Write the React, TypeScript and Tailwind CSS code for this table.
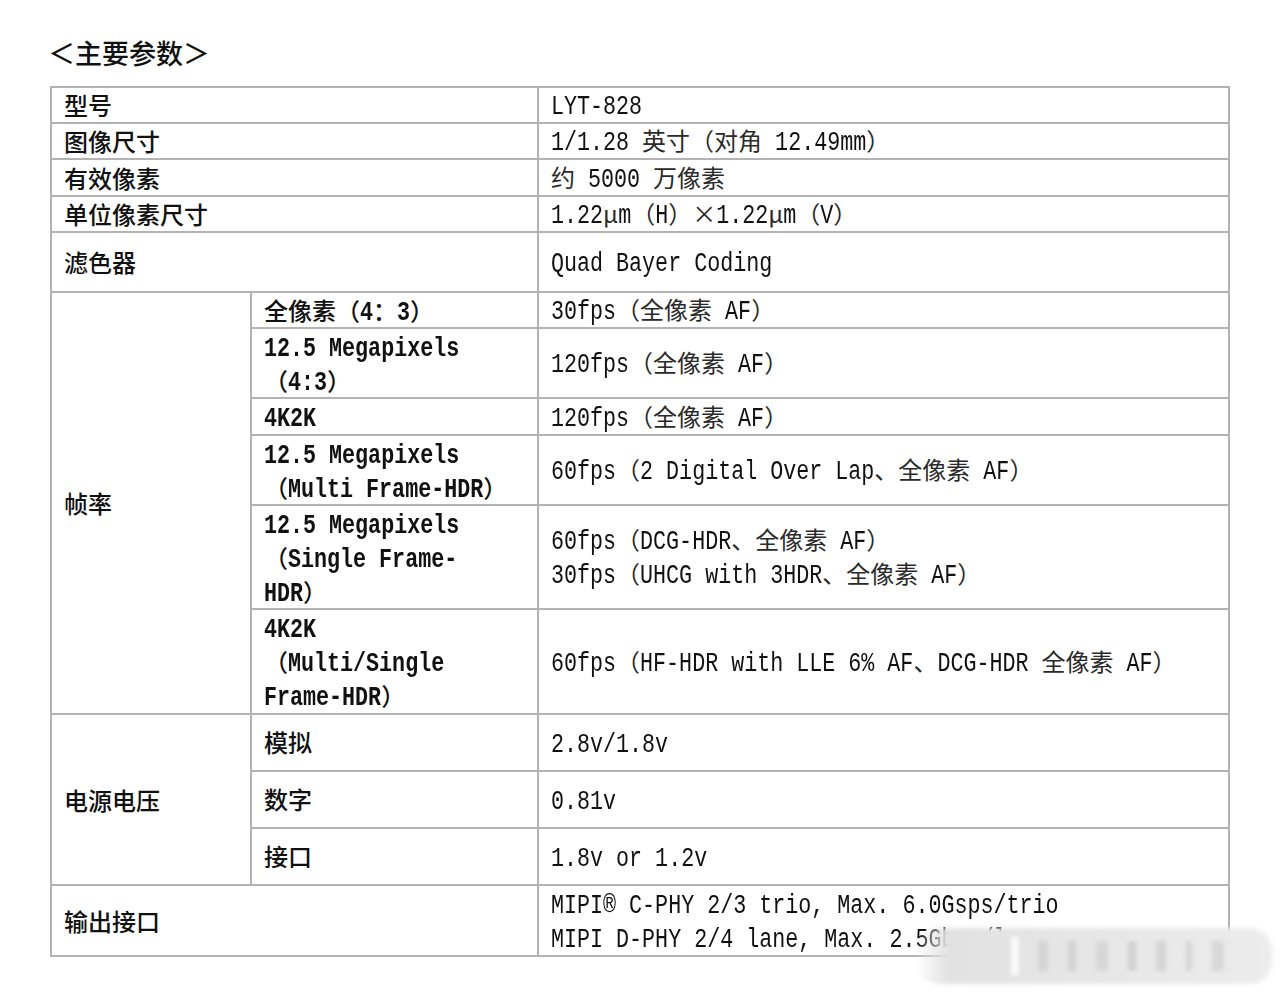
import React from "react";

type Line = string | string[];

const CJK = "font-['Noto_Sans_CJK_SC',sans-serif]";
// full-width runs (CJK, full-width punctuation, ×, μ) are split from half-width Latin runs
const WIDE = /([\u2E80-\u9FFF\u3000-\u303F\uFF00-\uFFEF×μ]+)/;

const FRAME_RATES: { mode: Line; fps: Line }[] = [
  { mode: "全像素（4：3）", fps: "30fps（全像素 AF）" },
  { mode: ["12.5 Megapixels", "（4:3）"], fps: "120fps（全像素 AF）" },
  { mode: "4K2K", fps: "120fps（全像素 AF）" },
  { mode: ["12.5 Megapixels", "（Multi Frame-HDR）"], fps: "60fps（2 Digital Over Lap、全像素 AF）" },
  {
    mode: ["12.5 Megapixels", "（Single Frame-", "HDR）"],
    fps: ["60fps（DCG-HDR、全像素 AF）", "30fps（UHCG with 3HDR、全像素 AF）"],
  },
  {
    mode: ["4K2K", "（Multi/Single", "Frame-HDR）"],
    fps: "60fps（HF-HDR with LLE 6% AF、DCG-HDR 全像素 AF）",
  },
];

const VOLTAGES = [
  { name: "模拟", value: "2.8v/1.8v" },
  { name: "数字", value: "0.81v" },
  { name: "接口", value: "1.8v or 1.2v" },
];

function Mixed({ text, strong = false }: { text: string; strong?: boolean }) {
  const parts = text.split(WIDE);
  return (
    <>
      {parts.map((p, i) =>
        p === "" ? null : i % 2 === 1 ? (
          <span
            key={i}
            className={`leading-none ${strong ? "font-medium text-[#111]" : "font-normal text-[#2a2a2a]"}`}
          >
            {p}
          </span>
        ) : (
          <span
            key={i}
            className={`inline-block origin-[50%_77%] scale-y-[1.28] whitespace-pre font-['Liberation_Mono',monospace] text-[21.7px] leading-none ${strong ? "font-bold text-[#111]" : "font-normal text-[#111]"}`}
          >
            {p}
          </span>
        )
      )}
    </>
  );
}

function Lines({ text, strong = false }: { text: Line; strong?: boolean }) {
  const list = Array.isArray(text) ? text : [text];
  return (
    <div className={`${CJK} text-[24px] leading-[34px]`}>
      {list.map((t, i) => (
        <div key={i} className="whitespace-nowrap">
          <Mixed text={t} strong={strong} />
        </div>
      ))}
    </div>
  );
}

function Cell({ children, className = "" }: { children: React.ReactNode; className?: string }) {
  return <div className={`flex items-center bg-white pl-[12px] ${className}`}>{children}</div>;
}

function Head({ children, className = "" }: { children: React.ReactNode; className?: string }) {
  return (
    <Cell className={`pl-[11px] ${CJK} text-[24px] font-medium leading-[34px] text-[#111] ${className}`}>
      {children}
    </Cell>
  );
}

function Value({ text }: { text: Line }) {
  return (
    <Cell className="pb-[2px]">
      <Lines text={text} />
    </Cell>
  );
}

function Mode({ text }: { text: Line }) {
  return (
    <Cell className="pb-[1px]">
      <Lines text={text} strong />
    </Cell>
  );
}

export default function App() {
  return (
    <div className="relative h-[994px] w-[1280px] overflow-hidden bg-white pl-[50px] pt-[36px]">
      <h1 className={`${CJK} -ml-[2px] text-[27px] font-medium leading-[34px] text-[#111]`}>＜主要参数＞</h1>

      <div className="mt-[16px] grid w-[1180px] grid-cols-[198px_285px_689px] grid-rows-[34px_34px_35px_34px_58px_34px_68px_35px_68px_102px_103px_55px_55px_55px_69px] gap-[2px] bg-[#b3b3b3] p-[2px]">
        <Head className="col-span-2">型号</Head>
        <Value text="LYT-828" />

        <Head className="col-span-2">图像尺寸</Head>
        <Value text="1/1.28 英寸（对角 12.49mm）" />

        <Head className="col-span-2">有效像素</Head>
        <Value text="约 5000 万像素" />

        <Head className="col-span-2">单位像素尺寸</Head>
        <Value text="1.22μm（H）×1.22μm（V）" />

        <Head className="col-span-2">滤色器</Head>
        <Value text="Quad Bayer Coding" />

        {/* 帧率 block */}
        <Head className="row-span-6">帧率</Head>
        {FRAME_RATES.map((r, i) => (
          <React.Fragment key={i}>
            <Mode text={r.mode} />
            <Value text={r.fps} />
          </React.Fragment>
        ))}

        {/* 电源电压 block */}
        <Head className="row-span-3">电源电压</Head>
        {VOLTAGES.map((v) => (
          <React.Fragment key={v.name}>
            <Mode text={v.name} />
            <Value text={v.value} />
          </React.Fragment>
        ))}

        <Head className="col-span-2">输出接口</Head>
        <Value text={["MIPI® C-PHY 2/3 trio, Max. 6.0Gsps/trio", "MIPI D-PHY 2/4 lane, Max. 2.5Gbps/lane"]} />
      </div>

      {/* blurred watermark over the bottom-right corner */}
      <div className="absolute left-[916px] top-[928px] h-[56px] w-[356px] rounded-[22px] bg-gradient-to-r from-white/0 from-[0%] via-[#e2e2e2] via-[9%] to-[#ececec] blur-[2px]">
        <div className="flex h-full items-center gap-[20px] pl-[96px]">
          <div className="h-[38px] w-[6px] bg-white" />
          <div className="h-[30px] w-[10px] bg-[#d4d4d4]" />
          <div className="h-[30px] w-[8px] bg-[#d2d2d2]" />
          <div className="h-[30px] w-[12px] bg-[#d6d6d6]" />
          <div className="h-[30px] w-[8px] bg-[#d1d1d1]" />
          <div className="h-[30px] w-[10px] bg-[#d5d5d5]" />
          <div className="h-[30px] w-[6px] bg-[#d4d4d4]" />
          <div className="h-[30px] w-[12px] bg-[#d8d8d8]" />
        </div>
      </div>
    </div>
  );
}
